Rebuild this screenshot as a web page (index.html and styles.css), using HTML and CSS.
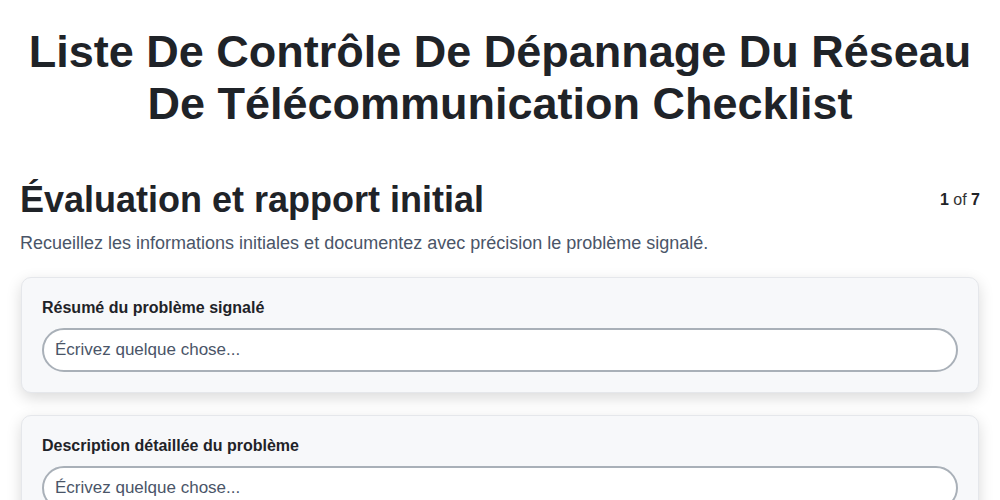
FILE: index.html
```html
<!DOCTYPE html>
<html lang="fr">
<head>
  <meta charset="UTF-8" />
  <meta name="viewport" content="width=device-width, initial-scale=1.0"/>
  <title>Checklist</title>
  <link rel="stylesheet" href="styles.css">
</head>
<body>

<div class="page">
  <h1 class="title">Liste De Contrôle De Dépannage Du Réseau De Télécommunication Checklist</h1>

  <!-- Step header -->
  <div class="step-head">
    <h2>Évaluation et rapport initial</h2>
    <div class="step-count"><b>1</b> of <b>7</b></div>
  </div>
  <p class="step-desc">Recueillez les informations initiales et documentez avec précision le problème signalé.</p>

  <!-- Fields -->
  <div class="card">
    <label class="field-label">Résumé du problème signalé</label>
    <input class="field-input" type="text" placeholder="Écrivez quelque chose..." />
  </div>

  <div class="card">
    <label class="field-label">Description détaillée du problème</label>
    <input class="field-input" type="text" placeholder="Écrivez quelque chose..." />
  </div>
</div>

</body>
</html>
```

FILE: styles.css
```css
body {
  margin: 0;
  font-family: 'Liberation Sans', Arial, sans-serif;
  background: #fff;
  color: #1f2328;
}
.page {
  padding: 0 20px;
}
.title {
  margin: 0;
  padding-top: 26px;
  text-align: center;
  font-size: 45px;
  line-height: 52px;
  font-weight: bold;
  color: #1f2328;
}
.step-head {
  display: flex;
  justify-content: space-between;
  align-items: center;
  margin-top: 48px;
}
.step-head h2 {
  margin: 0;
  font-size: 36px;
  line-height: 44px;
  font-weight: bold;
}
.step-count {
  font-size: 16px;
  color: #333;
}
.step-count b {
  color: #1f2328;
}
.step-desc {
  margin: 11px 0 23px;
  font-size: 18px;
  line-height: 21px;
  color: #4a5568;
}
.card {
  background: #f7f8fa;
  border: 1px solid #e5e7eb;
  border-radius: 10px;
  box-shadow: 0 5px 15px rgba(0,0,0,0.15);
  padding: 21px 20px 20px;
  margin: 0 1px 22px;
}
.field-label {
  display: block;
  font-size: 16px;
  font-weight: bold;
  color: #1f2328;
  margin-bottom: 11px;
}
.field-input {
  display: block;
  box-sizing: border-box;
  width: 100%;
  height: 44px;
  padding: 0 11px;
  border: 2px solid #a9b0b8;
  border-radius: 22px;
  background: #fff;
  font-family: inherit;
  font-size: 17px;
}
.field-input::placeholder {
  color: #4a5568;
}
```
